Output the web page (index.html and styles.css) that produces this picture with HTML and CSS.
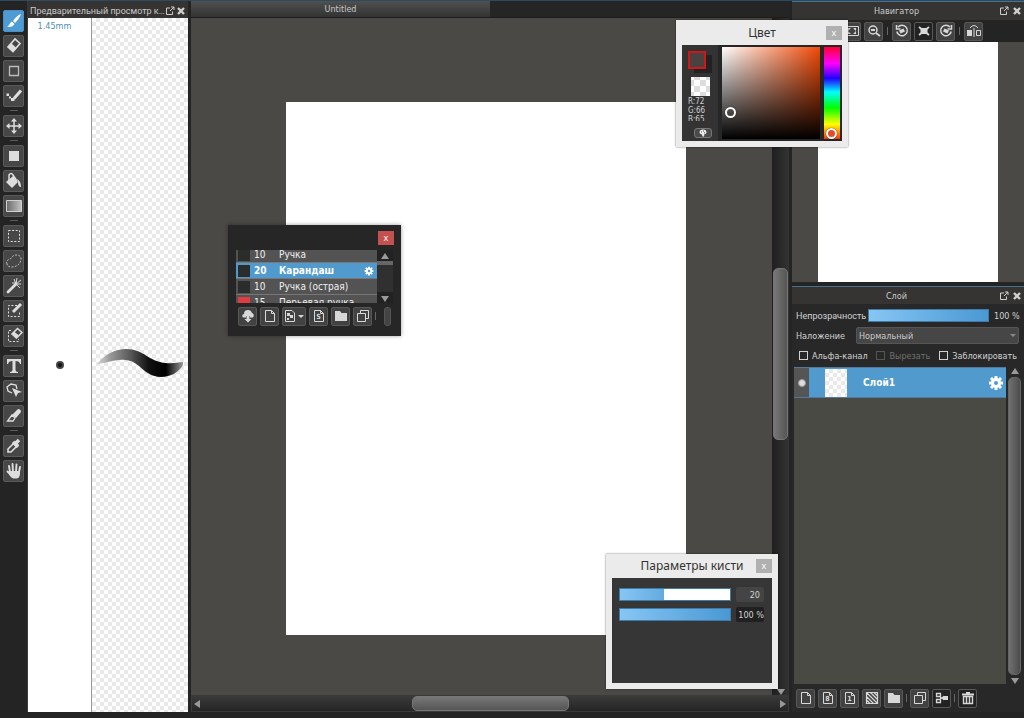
FILE: index.html
```html
<!DOCTYPE html>
<html lang="ru">
<head>
<meta charset="utf-8">
<meta name="viewport" content="width=device-width, initial-scale=1">
<title>Untitled</title>
<link rel="stylesheet" href="styles.css">
</head>
<body>
<svg class="sprite" aria-hidden="true">
  <symbol id="popout" viewBox="0 0 10 10"><path d="M5 2H1.500V8.500H7.500V5.500M6 1H9V4M9 1L5 5" fill="none" stroke="currentColor"/></symbol>
  <symbol id="cross" viewBox="0 0 8 8"><path d="M1 1L7 7M7 1L1 7" stroke="currentColor" stroke-width="2.400"/></symbol>
  <symbol id="gear" viewBox="0 0 16 16"><g stroke="currentColor" stroke-width="3"><path d="M8 1V15M1 8H15M3 3L13 13M13 3L3 13"/></g><circle cx="8" cy="8" r="5" fill="currentColor"/><circle cx="8" cy="8" r="2" fill="#519ace"/></symbol>
  <symbol id="page" viewBox="0 0 18 18"><path d="M4.500 3.500H10.500L13.500 6.500V14.500H4.500ZM10.500 3.500V6.500H13.500" fill="none" stroke="currentColor"/></symbol>
  <symbol id="folder" viewBox="0 0 18 18"><path d="M3 4H8L9.500 6H15V14H3Z" fill="currentColor"/></symbol>
  <symbol id="copy" viewBox="0 0 18 18"><path d="M6.500 6.500V3.500H14.500V11.500H11.500M3.500 6.500H11.500V14.500H3.500Z" fill="none" stroke="currentColor"/></symbol>
  <symbol id="rotate" viewBox="0 0 18 18"><path d="M5 5A5.300 5.300 0 1 1 3.800 9.500M3.500 3V7H7.500" fill="none" stroke="currentColor" stroke-width="1.500"/><path d="M6 8.500L10.500 6.500L12 9.500L7.500 11.500Z" fill="currentColor"/></symbol>
</svg>

<div class="app">
  <nav class="tools" aria-label="Инструменты">
    <button class="tool active" aria-label="Кисть"><svg viewBox="0 0 22 22"><path d="M18 4C15 5 12 8 10 11L12 13C15 10 17 7 18 4Z" fill="#fff"/><path d="M9 11.500L11.500 14C10 17 7 17.500 4 16.500C7 15.500 6.500 12.500 9 11.500Z" fill="#fff"/></svg></button>
    <button class="tool" aria-label="Ластик"><svg viewBox="0 0 22 22"><path d="M5 12L12 4L17 8.500L10 16.500Z" fill="none" stroke="currentColor" stroke-width="1.600"/><path d="M4.500 12L8 8L13.500 13L10 17Z" fill="currentColor"/></svg></button>
    <button class="tool" aria-label="Точка"><svg viewBox="0 0 22 22"><path d="M6.500 6.500H15.500V15.500H6.500Z" fill="none" stroke="#bbb" stroke-width="1.300"/></svg></button>
    <button class="tool" aria-label="Пиксель"><svg viewBox="0 0 22 22"><path d="M3.500 8.500H6V11H3.500ZM6 11.500H8V13.500H6ZM8 13H11.500V16H8Z" fill="currentColor"/><path d="M11 13.500L18 5.500" stroke="currentColor" stroke-width="3"/></svg></button>
    <span class="tool-sep"></span>
    <button class="tool" aria-label="Перемещение"><svg viewBox="0 0 22 22"><path d="M11 5V17M5 11H17" stroke="currentColor" stroke-width="1.500"/><path d="M11 3L14 6.500H8ZM11 19L14 15.500H8ZM3 11L6.500 8V14ZM19 11L15.500 8V14Z" fill="currentColor"/></svg></button>
    <span class="tool-sep"></span>
    <button class="tool" aria-label="Фигура"><svg viewBox="0 0 22 22"><path d="M6 6H16V16H6Z" fill="currentColor"/></svg></button>
    <button class="tool" aria-label="Заливка"><svg viewBox="0 0 22 22"><path d="M3 12L10 6L15 12L9 18Z" fill="currentColor"/><path d="M6 10V5Q8 2 10 5L14 11" fill="none" stroke="currentColor" stroke-width="1.500"/><path d="M14 9Q18 11 18 17Q15 17 15 12Z" fill="currentColor"/></svg></button>
    <button class="tool" aria-label="Градиент"><svg viewBox="0 0 22 22"><defs><linearGradient id="g1"><stop stop-color="#6a6a6a"/><stop offset="1" stop-color="#c4c4c4"/></linearGradient></defs><path d="M3.500 5.500H18.500V16.500H3.500Z" fill="url(#g1)" stroke="#d0d0d0"/></svg></button>
    <span class="tool-sep"></span>
    <button class="tool" aria-label="Выделение"><svg viewBox="0 0 22 22"><path d="M5.500 5.500H16.500V16.500H5.500Z" fill="none" stroke="currentColor" stroke-dasharray="2 1.600"/></svg></button>
    <button class="tool" aria-label="Лассо"><svg viewBox="0 0 22 22"><path d="M4 14C2 9 8 10 9 7C11 4 18 4 18 9C18 14 13 17 9 17C6 17 4 16 4 14Z" fill="none" stroke="#bbb" stroke-dasharray="2 1.300"/></svg></button>
    <button class="tool" aria-label="Волшебная палочка"><svg viewBox="0 0 22 22"><path d="M5 17L13 9" stroke="currentColor" stroke-width="2.800" stroke-linecap="round"/><path d="M13 9L11 4M13 9L14 3M13 9L18 5M13 9H18M13 9L17 13M12 8H9" stroke="currentColor"/></svg></button>
    <button class="tool" aria-label="Перо выделения"><svg viewBox="0 0 22 22"><path d="M14 5.500H5.500V16.500H16.500V11" fill="none" stroke="currentColor" stroke-dasharray="2 1.600"/><path d="M10 12L18 4" stroke="currentColor" stroke-width="3"/></svg></button>
    <button class="tool" aria-label="Ластик выделения"><svg viewBox="0 0 22 22"><path d="M8 5.500H5.500V16.500H15.500V14" fill="none" stroke="currentColor" stroke-dasharray="2 1.600"/><path d="M9 9L14.500 3.500L19 7.500L13.500 13Z" fill="none" stroke="currentColor" stroke-width="1.500"/><path d="M8.500 9L11 6.500L16 10.500L13 13.500Z" fill="currentColor"/></svg></button>
    <span class="tool-sep"></span>
    <button class="tool" aria-label="Текст"><svg viewBox="0 0 22 22"><path d="M4 4H18V9H17Q16.500 6 12.500 6V15Q12.500 17 15 17V18H7V17Q9.500 17 9.500 15V6Q5.500 6 5 9H4Z" fill="currentColor"/></svg></button>
    <button class="tool" aria-label="Операция"><svg viewBox="0 0 22 22"><path d="M9 13L5 11L4 7L8 4L13 5L14 9" fill="none" stroke="currentColor" stroke-width="1.300"/><path d="M9 8L19 12L15 13L13 17Z" fill="currentColor"/></svg></button>
    <button class="tool" aria-label="Нож"><svg viewBox="0 0 22 22"><path d="M9 10L15 4Q18 4 18 7L13 13Z" fill="currentColor"/><path d="M9 10L4.500 16H10L12 13Z" fill="none" stroke="currentColor" stroke-width="1.300"/></svg></button>
    <span class="tool-sep"></span>
    <button class="tool" aria-label="Пипетка"><svg viewBox="0 0 22 22"><path d="M12 7L5 14V17H8L15 10Z" fill="none" stroke="currentColor" stroke-width="1.600"/><path d="M10 7L15 12M13 8L16 5" stroke="currentColor" stroke-width="3.500"/></svg></button>
    <button class="tool" aria-label="Рука"><svg viewBox="0 0 22 22"><path d="M7 12L6 6M10 12L9.500 4M13 12L13.500 4.500M16 12L17 7M4.500 11.500L8 15" stroke="currentColor" stroke-width="1.900" stroke-linecap="round"/><path d="M6 11H17V14Q16.500 18 14 18.500H10Q8 18 6 14.500Z" fill="currentColor"/></svg></button>
  </nav>

  <section class="preview">
    <header class="bar"><h2>Предварительный просмотр к…</h2><button class="bar-btn" aria-label="Открепить"><svg class="i10"><use href="#popout"/></svg></button><button class="bar-btn" aria-label="Закрыть"><svg class="i8"><use href="#cross"/></svg></button></header>
    <div class="preview-body">
      <div class="tip"><span class="size">1.45mm</span><span class="dot"></span></div>
      <div class="stroke checker">
        <svg viewBox="0 0 96 36"><defs><linearGradient id="g2"><stop stop-color="#aaa" stop-opacity=".4"/><stop offset=".15" stop-color="#999"/><stop offset=".4" stop-color="#555"/><stop offset=".6" stop-color="#111"/><stop offset=".8"/><stop offset="1" stop-color="#999"/></linearGradient></defs><path d="M5 17C13 7 24 2 34 2C52 2 57 15 74 16C81 17 87 15 91 15V18C87 25 79 30 69 30C50 29 49 14 33 13C22 12 13 17 5 17Z" fill="url(#g2)"/></svg>
      </div>
    </div>
  </section>

  <main class="work">
    <div class="tabs"><button class="tab">Untitled</button></div>
    <div class="viewport"><div class="paper"></div></div>
    <div class="vbar"><span class="vthumb"></span><span class="arrow down"></span></div>
    <div class="hbar"><span class="arrow left"></span><span class="hthumb"></span><span class="arrow right"></span></div>
  </main>

  <aside class="side">
    <section class="navigator">
      <header class="bar center"><h2>Навигатор</h2><button class="bar-btn" aria-label="Открепить"><svg class="i10"><use href="#popout"/></svg></button><button class="bar-btn" aria-label="Закрыть"><svg class="i8"><use href="#cross"/></svg></button></header>
      <div class="nav-tools">
        <button class="mini" aria-label="По размеру"><svg viewBox="0 0 18 18"><path d="M2.500 4.500H15.500V13.500H2.500Z" fill="none" stroke="currentColor"/><path d="M5 6H8L5 9ZM13 6H10L13 9ZM5 12H8L5 9ZM13 12H10L13 9Z" fill="currentColor"/></svg></button>
        <button class="mini" aria-label="Уменьшить"><svg viewBox="0 0 18 18"><circle cx="8" cy="8" r="4" fill="none" stroke="currentColor" stroke-width="1.500"/><path d="M6 8H10M11 11L15 14" stroke="currentColor" stroke-width="1.800"/></svg></button>
        <span class="sep"></span>
        <button class="mini" aria-label="Повернуть влево"><svg><use href="#rotate"/></svg></button>
        <button class="mini dark" aria-label="Сбросить поворот"><svg viewBox="0 0 18 18"><path d="M5.500 6H12.500V12H5.500Z" fill="currentColor"/><path d="M4 5L14 13M14 5L4 13" stroke="currentColor" stroke-width="1.800"/></svg></button>
        <button class="mini" aria-label="Повернуть вправо"><svg class="flip"><use href="#rotate"/></svg></button>
        <span class="sep"></span>
        <button class="mini" aria-label="Отразить"><svg viewBox="0 0 18 18"><path d="M2 8H7V14H2Z" fill="currentColor"/><path d="M11.500 8.500H15.500V13.500H11.500ZM5 6Q9 1 13 6M9 6V15" fill="none" stroke="currentColor"/></svg></button>
      </div>
      <div class="nav-view"><div class="nav-paper"></div></div>
    </section>

    <section class="layers">
      <header class="bar center"><h2>Слой</h2><button class="bar-btn" aria-label="Открепить"><svg class="i10"><use href="#popout"/></svg></button><button class="bar-btn" aria-label="Закрыть"><svg class="i8"><use href="#cross"/></svg></button></header>
      <div class="opacity"><label for="op">Непрозрачность</label><input id="op" class="slider full" type="range" min="0" max="100" value="100"><output for="op">100 %</output></div>
      <div class="blend"><label for="bm">Наложение</label><span class="pick"><select id="bm"><option>Нормальный</option></select></span></div>
      <div class="flags">
        <label><input type="checkbox">Альфа-канал</label>
        <label class="off"><input type="checkbox" disabled>Вырезать</label>
        <label><input type="checkbox">Заблокировать</label>
      </div>
      <div class="layer-area">
        <div class="layer-list">
          <div class="layer">
            <button class="eye" aria-label="Видимость"><span></span></button>
            <span class="thumb checker"></span><span class="layer-name">Слой1</span>
            <button class="gear" aria-label="Настройки слоя"><svg class="i16"><use href="#gear"/></svg></button>
          </div>
        </div>
        <div class="side-scroll"><span class="arrow up"></span><span class="side-thumb"></span><span class="arrow down"></span></div>
      </div>
      <div class="layer-tools">
        <button class="mini" aria-label="Новый слой"><svg><use href="#page"/></svg></button>
        <button class="mini" aria-label="Слой 8 бит"><svg><use href="#page"/></svg><b>8</b></button>
        <button class="mini" aria-label="Слой 1 бит"><svg><use href="#page"/></svg><b>1</b></button>
        <button class="mini" aria-label="Полутон"><svg viewBox="0 0 18 18"><path d="M3.500 3.500H14.500V14.500H3.500ZM3.500 7.500L10.500 14.500M3.500 11L7 14.500M3.500 3.500L14.500 14.500M7.500 3.500L14.500 10.500M11 3.500L14.500 7" fill="none" stroke="currentColor" stroke-width="1.200"/></svg></button>
        <button class="mini" aria-label="Папка"><svg><use href="#folder"/></svg></button>
        <span class="sep"></span>
        <button class="mini" aria-label="Дублировать"><svg><use href="#copy"/></svg></button>
        <button class="mini dark" aria-label="Объединить"><svg viewBox="0 0 18 18"><path d="M3.500 4.500H7.500V7.500H3.500ZM3.500 10.500H7.500V13.500H3.500ZM7 9H12" fill="none" stroke="currentColor" stroke-width="1.300"/><path d="M11 7H15V11H11ZM8 9L11 6.500V11.500Z" fill="currentColor"/></svg></button>
        <span class="sep"></span>
        <button class="mini dark" aria-label="Удалить"><svg viewBox="0 0 18 18"><path d="M4.500 7.500H13.500V14.500H4.500ZM7.500 7V14M10.500 7V14" fill="none" stroke="currentColor" stroke-width="1.400"/><path d="M3 4.500H15V6.500H3ZM7 3H11V5H7Z" fill="currentColor"/></svg></button>
      </div>
    </section>
  </aside>
</div>

<section class="window color-window">
  <header class="win-title"><h2>Цвет</h2><button class="win-close" aria-label="Закрыть">x</button></header>
  <div class="color-body">
    <div class="color-info">
      <div class="swatches"><span class="sw-back"></span><span class="sw-front"></span></div>
      <span class="sw-none"></span>
      <div class="rgb"><span>R:72</span><span>G:66</span><span>B:65</span></div>
      <button class="palette-btn" aria-label="Палитра"><svg viewBox="0 0 8 8"><path d="M4 .5Q7.500 .5 7.500 3.500Q7.500 5 5.500 5L5 7.500H3.500L3 5.500Q.5 5 .5 3.500Q.5 .5 4 .5Z" fill="currentColor"/><path d="M2 3H3M4 2H5M5 3.800H6" stroke="#333" stroke-width=".8"/></svg></button>
    </div>
    <div class="sv"><span class="ring sv-ring"></span></div>
    <div class="hue"><span class="ring hue-ring"></span></div>
  </div>
</section>

<section class="window brush-window">
  <header class="win-title"><button class="win-close red" aria-label="Закрыть">x</button></header>
  <div class="brush-area">
    <div class="brush-list">
      <ul>
        <li><i></i><span>10</span>Ручка</li>
        <li class="sel"><i></i><span>20</span>Карандаш<button class="gear" aria-label="Настройки кисти"><svg class="i10"><use href="#gear"/></svg></button></li>
        <li><i></i><span>10</span>Ручка (острая)</li>
        <li><i class="red"></i><span>15</span>Перьевая ручка</li>
      </ul>
    </div>
    <div class="brush-scroll"><span class="arrow up"></span><span class="arrow down"></span></div>
  </div>
  <div class="brush-tools">
    <button class="mini" aria-label="Облако"><svg viewBox="0 0 18 18"><path d="M4 10.500Q2 8 5 7Q5 3 9 3Q12 3 13 6Q16 7 14 10.500H11V9H7V10.500Z" fill="currentColor"/><path d="M7.500 8H10.500V12H12.500L9 15.500L5.500 12H7.500Z" fill="currentColor"/></svg></button>
    <button class="mini" aria-label="Новая кисть"><svg><use href="#page"/></svg></button>
    <button class="mini wide" aria-label="Добавить кисть"><svg viewBox="0 0 24 18"><path d="M3.500 3.500H10L12.500 6V14.500H3.500Z" fill="none" stroke="currentColor"/><path d="M5 6H8V9H5ZM8 8H11V11H8ZM5 11H7V13H5Z" fill="currentColor"/><path d="M16 8H22L19 11Z" fill="currentColor"/></svg></button>
    <button class="mini" aria-label="Скрипт"><svg><use href="#page"/></svg><b>S</b></button>
    <button class="mini" aria-label="Папка"><svg><use href="#folder"/></svg></button>
    <button class="mini" aria-label="Копия"><svg><use href="#copy"/></svg></button>
    <span class="sep"></span><span class="grip"></span>
  </div>
</section>

<section class="window params-window">
  <header class="win-title"><h2>Параметры кисти</h2><button class="win-close" aria-label="Закрыть">x</button></header>
  <div class="params-body">
    <div class="param"><input class="slider part" type="range" min="0" max="50" value="20" aria-label="Размер кисти"><input class="num" type="text" value="20" aria-label="Размер"></div>
    <div class="param"><input class="slider full" type="range" min="0" max="100" value="100" aria-label="Непрозрачность кисти"><input class="num black" type="text" value="100 %" aria-label="Непрозрачность"></div>
  </div>
</section>
</body>
</html>
```
FILE: styles.css
```css
* { box-sizing: border-box; }
html, body { height: 100%; }
body { margin: 0; overflow: hidden; background: #242424; color: #d2d2d2; font: 9px/12px "DejaVu Sans Condensed", "Open Sans", sans-serif; }
button, input, select { margin: 0; padding: 0; border: 0; font: inherit; color: inherit; background: none; }
h2 { margin: 0; font-size: inherit; font-weight: 400; }
svg { display: block; }
.sprite { position: absolute; width: 0; height: 0; }
.i8 { width: 8px; height: 8px; }
.i10 { width: 10px; height: 10px; }
.i16 { width: 16px; height: 16px; }
.checker { background: repeating-conic-gradient(#e9e9e9 0 25%, #fff 0 50%) 0 0 / 8px 8px; }

.app { display: grid; grid-template-columns: 28px 160px minmax(0, 1fr) 232px; height: 100%; padding-bottom: 6px; border-top: 1px solid #2c4a60; }

.tools { display: flex; flex-direction: column; gap: 3px; padding: 9px 3px 0; border-right: 1px solid #3a3a3a; background: #242424; }
.tool { height: 22px; border: 1px solid #5a5a5a; border-radius: 2px; background: #474747; color: #dedede; }
.tool svg { width: 22px; height: 22px; margin: -1px; }
.tool.active { border-color: #4a90c4; background: #4f9bd3; }
.tool-sep { width: 8px; height: 2px; margin: 0 auto; border-top: 1px solid #5a5a5a; }

.bar { display: flex; align-items: center; height: 17px; padding: 2px 1px 0 2px; background: #353433; color: #c9c9c9; white-space: nowrap; }
.bar h2 { flex: 1; }
.bar-btn { display: grid; place-items: center; width: 13px; height: 12px; color: #cfcfcf; }
.preview .bar h2 { font-family: Roboto, sans-serif; }
.center h2 { padding-left: 2px; text-align: center; }

.preview { display: flex; flex-direction: column; min-width: 0; }
.preview-body { flex: 1; display: grid; grid-template-columns: 64px 1fr; }
.tip { display: grid; grid-template-rows: 1fr auto 1fr; justify-items: center; border-right: 1px solid #999; background: #fff; }
.size { padding-top: 2px; padding-right: 10px; color: #4d90b8; }
.dot { width: 8px; height: 8px; border: 2px solid #444; border-radius: 50%; background: #111; }
.stroke { display: flex; align-items: center; }
.stroke svg { width: 100%; }

.work { display: grid; grid-template-columns: minmax(0, 1fr) 17px; grid-template-rows: 17px minmax(0, 1fr) 17px; padding: 0 3px; }
.tabs { grid-column: 1 / -1; background: #252525; border-bottom: 1px solid #1d1d1d; }
.tab { display: block; width: 50%; height: 16px; background: linear-gradient(#505050, #333); color: #c8c8c8; }
.viewport { display: grid; padding: 84px 86px 60px 95px; background: #4a4946; }
.paper { background: #fff; }
.vbar { display: flex; flex-direction: column; align-items: center; justify-content: space-between; padding: 250px 1px 0; background: linear-gradient(90deg, #1f1f1f, #333); }
.vthumb { width: 100%; height: 172px; border-radius: 5px; background: linear-gradient(90deg, #777, #555); border: 1px solid #777; }
.hbar { grid-column: 1 / -1; display: flex; align-items: center; justify-content: space-between; padding: 0 2px; background: linear-gradient(#3a3a3a, #252525); border: 1px solid #3a3a3a; }
.hthumb { width: 157px; height: 15px; border-radius: 5px; background: linear-gradient(#777, #555); border: 1px solid #777; }
.arrow { width: 0; height: 0; border: 4px solid transparent; }
.arrow.up { border-top: 0; border-bottom: 6px solid #999; }
.arrow.down { border-bottom: 0; border-top: 6px solid #999; }
.arrow.left { border-left: 0; border-right: 6px solid #999; }
.arrow.right { border-right: 0; border-left: 6px solid #999; }

.side { display: grid; grid-template-columns: minmax(0, 1fr); grid-template-rows: 281px minmax(0, 1fr); gap: 4px; }
.side .bar { padding-top: 0; border-top: 1px solid #47718f; }
.navigator, .layers { display: flex; flex-direction: column; min-height: 0; }
.navigator .bar { height: 19px; }
.layers .bar { height: 18px; }
.nav-tools { display: flex; align-items: center; gap: 3px; height: 22px; padding-left: 50px; }
.mini { position: relative; display: grid; place-items: center; width: 19px; height: 19px; border: 1px solid #585858; border-radius: 2px; background: #424242; color: #d8d8d8; }
.mini svg { width: 18px; height: 18px; margin: -1px; }
.mini.dark { background: #222; }
.mini b { position: absolute; padding-top: 2px; font-size: 7px; line-height: 8px; }
.mini .flip { transform: scaleX(-1); }
.sep { width: 1px; height: 8px; background: #666; }
.nav-tools .sep { margin: 0 1px; }
.nav-view { flex: 1; display: grid; padding: 0 26px; background: #4a4946; }
.nav-paper { background: #fff; }

.layers { background: #282828; }
.opacity, .blend { display: flex; align-items: center; padding: 0 5px 0 4px; }
.opacity { gap: 5px; height: 23px; }
.opacity label { width: 67px; font-family: Roboto, sans-serif; }
.opacity output { width: 25px; white-space: nowrap; }
.blend { height: 17px; }
.blend label { width: 60px; }
.pick { flex: 1; position: relative; height: 17px; }
.pick::after { content: ""; position: absolute; right: 3px; top: 7px; border: 3px solid transparent; border-top: 3px solid #888; border-bottom: 0; }
select { appearance: none; width: 100%; height: 100%; padding-left: 2px; border: 1px solid #555; border-radius: 2px; background: #464646; color: #c9c9c9; }
.slider { appearance: none; flex: 1; min-width: 0; height: 13px; border: 1px solid #3f7ba8; }
.slider::-webkit-slider-thumb { appearance: none; width: 0; height: 0; }
.full { background: linear-gradient(90deg, #86c6f4, #4a98d3); }
.part { background: linear-gradient(90deg, #86c6f4, #62abe0) 0 0 / 40% 100% no-repeat #fff; }
.flags { display: flex; align-items: center; justify-content: space-between; height: 23px; padding: 0 7px; white-space: nowrap; }
.flags label { display: flex; align-items: center; gap: 4px; }
.flags input { appearance: none; width: 9px; height: 9px; border: 1px solid #d0d0d0; }
.flags .off { color: #707070; }
.flags .off input { border-color: #555; }
.layer-area { flex: 1; min-height: 0; display: grid; grid-template-columns: minmax(0, 1fr) 16px; padding: 0 2px; }
.layer-list { background: #4a4a45; }
.layer { display: flex; align-items: center; height: 31px; padding-right: 2px; border: 1px solid #55789a; border-width: 1px 0; background: #519ace; }
.eye { display: grid; place-items: center; width: 15px; height: 100%; background: #555; }
.eye span { width: 8px; height: 8px; border-radius: 50%; background: #ddd; border: 1px solid #999; }
.thumb { width: 22px; height: 28px; margin: 0 16px; }
.layer-name { flex: 1; color: #fff; font-size: 10px; font-weight: 700; }
.gear { color: #fff; }
.side-scroll { display: flex; flex-direction: column; align-items: center; gap: 3px; padding: 1px 0 0 1px; }
.side-thumb { flex: 1; width: 13px; border: 1px solid #666; border-radius: 5px; background: linear-gradient(90deg, #707070, #4c4c4c); }
.layer-tools { display: flex; align-items: center; gap: 3px; height: 28px; padding-left: 4px; }

.window { position: absolute; display: flex; flex-direction: column; padding: 0 6px 6px; background: #ebebeb; box-shadow: 0 0 2px #0008; }
.win-title { position: relative; display: flex; align-items: center; justify-content: center; color: #333; font: 12px/18px "Noto Sans", sans-serif; }
.win-close { position: absolute; right: 0; width: 16px; height: 14px; background: #b0b0b0; color: #fff; font-size: 9px; line-height: 12px; }
.win-close.red { background: #c4504f; }

.color-window { left: 676px; top: 20px; width: 172px; height: 127px; }
.color-window .win-title { height: 25px; }
.color-body { flex: 1; min-height: 0; display: grid; grid-template-columns: 36px 1fr 16px; gap: 4px; padding: 2px 2px 2px 0; background: #262626; }
.color-info { display: flex; flex-direction: column; align-items: flex-start; margin: -2px 0; padding: 6px 0 0 6px; background: #333; }
.swatches { position: relative; width: 24px; height: 22px; flex: none; }
.sw-front, .sw-back { position: absolute; width: 18px; height: 18px; }
.sw-front { left: 0; top: 0; background: #484241; border: 2px solid #d01616; }
.sw-back { right: 0; bottom: 0; background: #222; }
.sw-none { flex: none; width: 19px; height: 19px; margin: 4px 3px 0; background: repeating-conic-gradient(#ddd 0 25%, #fff 0 50%) 3px 3px / 12px 12px; }
.rgb { display: flex; flex-direction: column; height: 24px; flex: none; overflow: hidden; font-size: 8px; line-height: 9px; margin-top: 1px; }
.palette-btn { display: grid; place-items: center; width: 18px; height: 10px; margin: 7px 0 0 6px; border: 1px solid #777; border-radius: 3px; background: #4a4a4a; color: #eee; }
.palette-btn svg { width: 8px; height: 8px; }
.sv { position: relative; background: linear-gradient(to top, #000, transparent), linear-gradient(90deg, #fff, #f04a08); }
.hue { position: relative; background: linear-gradient(#f03, #f0f 18%, #20f 34%, #0ff 49%, #0f0 66%, #ff0 84%, #f30); }
.ring { position: absolute; width: 11px; height: 11px; border: 2px solid #fff; border-radius: 50%; box-shadow: 0 0 1px #000; }
.sv-ring { left: 3%; top: 65%; }
.hue-ring { left: 2px; bottom: 0; background: #e34b2c; }

.brush-window { left: 228px; top: 225px; width: 173px; height: 111px; padding: 0 8px; background: #262626; box-shadow: 0 0 4px #0006; }
.brush-window .win-title { height: 25px; }
.brush-window .win-close { right: -1px; }
.brush-area { display: grid; grid-template-columns: 1fr 16px; height: 53px; font-size: 10px; }
.brush-list { overflow: hidden; }
.brush-list ul { margin: -3px 0 0; padding: 0; list-style: none; }
.brush-list li { display: flex; align-items: center; height: 16px; padding-left: 2px; border-bottom: 1px solid #777; background: #535353; color: #f0f0f0; white-space: nowrap; }
.brush-list i { width: 12px; height: 12px; margin-right: 4px; background: #2b2d2d; }
.brush-list i.red { background: #e23b40; }
.brush-list span { width: 25px; }
.brush-list .sel { background: #519ace; color: #fff; font-weight: 700; }
.brush-list .gear { margin: 0 3px 0 auto; }
.brush-scroll { display: flex; flex-direction: column; align-items: center; justify-content: space-between; padding: 3px 0 1px; background: linear-gradient(#222 11px, #666 11px 15px, #303030 15px 42px, #222 42px); }
.brush-tools { display: flex; align-items: center; gap: 3px; margin-top: 3px; padding: 0 2px; height: 20px; }
.brush-tools .mini { flex: none; }
.brush-tools .wide { width: 24px; }
.brush-tools .wide svg { width: 24px; }
.grip { flex: none; width: 7px; height: 19px; margin-left: auto; border: 1px solid #555; border-radius: 3px; background: #444; }

.params-window { left: 606px; top: 554px; width: 172px; height: 135px; }
.params-window .win-title { height: 24px; }
.params-body { flex: 1; display: flex; flex-direction: column; gap: 5px; padding: 9px 8px 0 7px; background: #363636; }
.param { display: flex; align-items: center; gap: 5px; height: 15px; }
.num { width: 28px; height: 15px; padding-right: 4px; border-radius: 2px; background: #444; text-align: right; }
.num.black { padding: 0; background: #202020; }
```
